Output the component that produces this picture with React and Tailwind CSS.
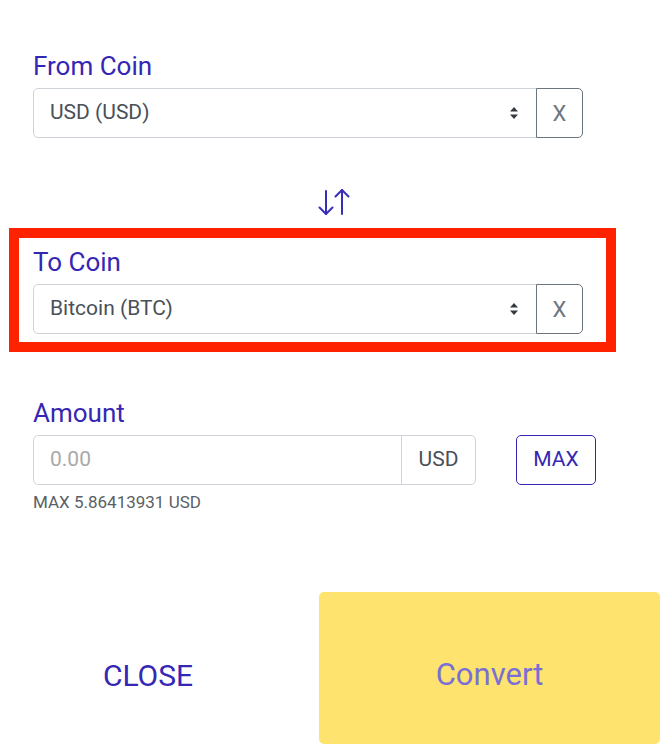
import React, { useState } from "react";

const SelectArrows = () => (
    <svg width="10" height="14" viewBox="0 0 10 14" className="shrink-0">
        <path d="M5 1 L9 5.5 L1 5.5 Z" fill="#343a40" />
        <path d="M5 13 L9 8.5 L1 8.5 Z" fill="#343a40" />
    </svg>
);

const CoinSelect = ({ value }) => (
    <div className="flex w-[550px] h-[50px]">
        <div className="flex-1 flex items-center justify-between border border-[#ced4da] rounded-l-[5px] pl-[16px] pr-[17px] text-[21px] text-[#495057]">
            <span>{value}</span>
            <SelectArrows />
        </div>
        <button className="w-[47px] -ml-px border border-[#6c757d] rounded-r-[5px] text-[22px] text-[#6c757d] bg-white flex items-center justify-center">
            X
        </button>
    </div>
);

const Label = ({ children }) => (
    <div className="text-[26px] leading-[29px] text-[#3527b3] mb-[7px]">{children}</div>
);

const App = () => {
    const [amount, setAmount] = useState("");

    return (
        <div className="w-[660px] h-[744px] bg-white overflow-hidden flex flex-col" style={{ fontFamily: "Roboto, 'Noto Sans', sans-serif" }}>
            {/* From Coin */}
            <div className="pl-[33px] pt-[52px]">
                <Label>From Coin</Label>
                <CoinSelect value="USD (USD)" />
            </div>

            {/* Swap */}
            <div className="flex justify-start pl-[318px] mt-[51px]">
                <svg width="32" height="26" viewBox="0 0 32 26" fill="none" stroke="#3a2db8" strokeWidth="2" strokeLinecap="round" strokeLinejoin="round">
                    <path d="M8 2 V25" />
                    <path d="M1.5 18.5 L8 25 L14.5 18.5" />
                    <path d="M24 1 V25" />
                    <path d="M17.5 7.5 L24 1 L30.5 7.5" />
                </svg>
            </div>

            {/* To Coin (highlighted) */}
            <div className="ml-[9px] mt-[13px] w-[607px] border-[10px] border-[#ff2200] pl-[14px] pt-[10px] pb-[8px]">
                <Label>To Coin</Label>
                <CoinSelect value="Bitcoin (BTC)" />
            </div>

            {/* Amount */}
            <div className="pl-[33px] mt-[47px]">
                <Label>Amount</Label>
                <div className="flex items-center">
                    <div className="flex w-[443px] h-[50px] border border-[#ced4da] rounded-[5px]">
                        <input
                            value={amount}
                            onChange={(e) => setAmount(e.target.value)}
                            placeholder="0.00"
                            className="flex-1 min-w-0 pl-[16px] text-[21px] text-[#495057] placeholder:text-[#a9a9a9] outline-none bg-transparent"
                        />
                        <div className="w-[74px] border-l border-[#ced4da] flex items-center justify-center text-[21px] text-[#495057]">
                            USD
                        </div>
                    </div>
                    <button className="ml-[40px] w-[80px] h-[50px] border border-[#3527b3] rounded-[5px] text-[21px] text-[#3527b3]">
                        MAX
                    </button>
                </div>
                <div className="mt-[6px] text-[17px] leading-[22px] text-[#5a5f66]">MAX 5.86413931 USD</div>
            </div>

            {/* Footer buttons */}
            <div className="mt-auto flex h-[152px]">
                <button className="w-[296px] flex items-center justify-center pt-[14px] text-[30px] text-[#3527b3]">
                    CLOSE
                </button>
                <button className="ml-[23px] flex-1 bg-[#fee36e] rounded-[5px] flex items-center justify-center pt-[14px] text-[31px] text-[#7a6fd4]">
                    Convert
                </button>
            </div>
        </div>
    );
};

export default App;
